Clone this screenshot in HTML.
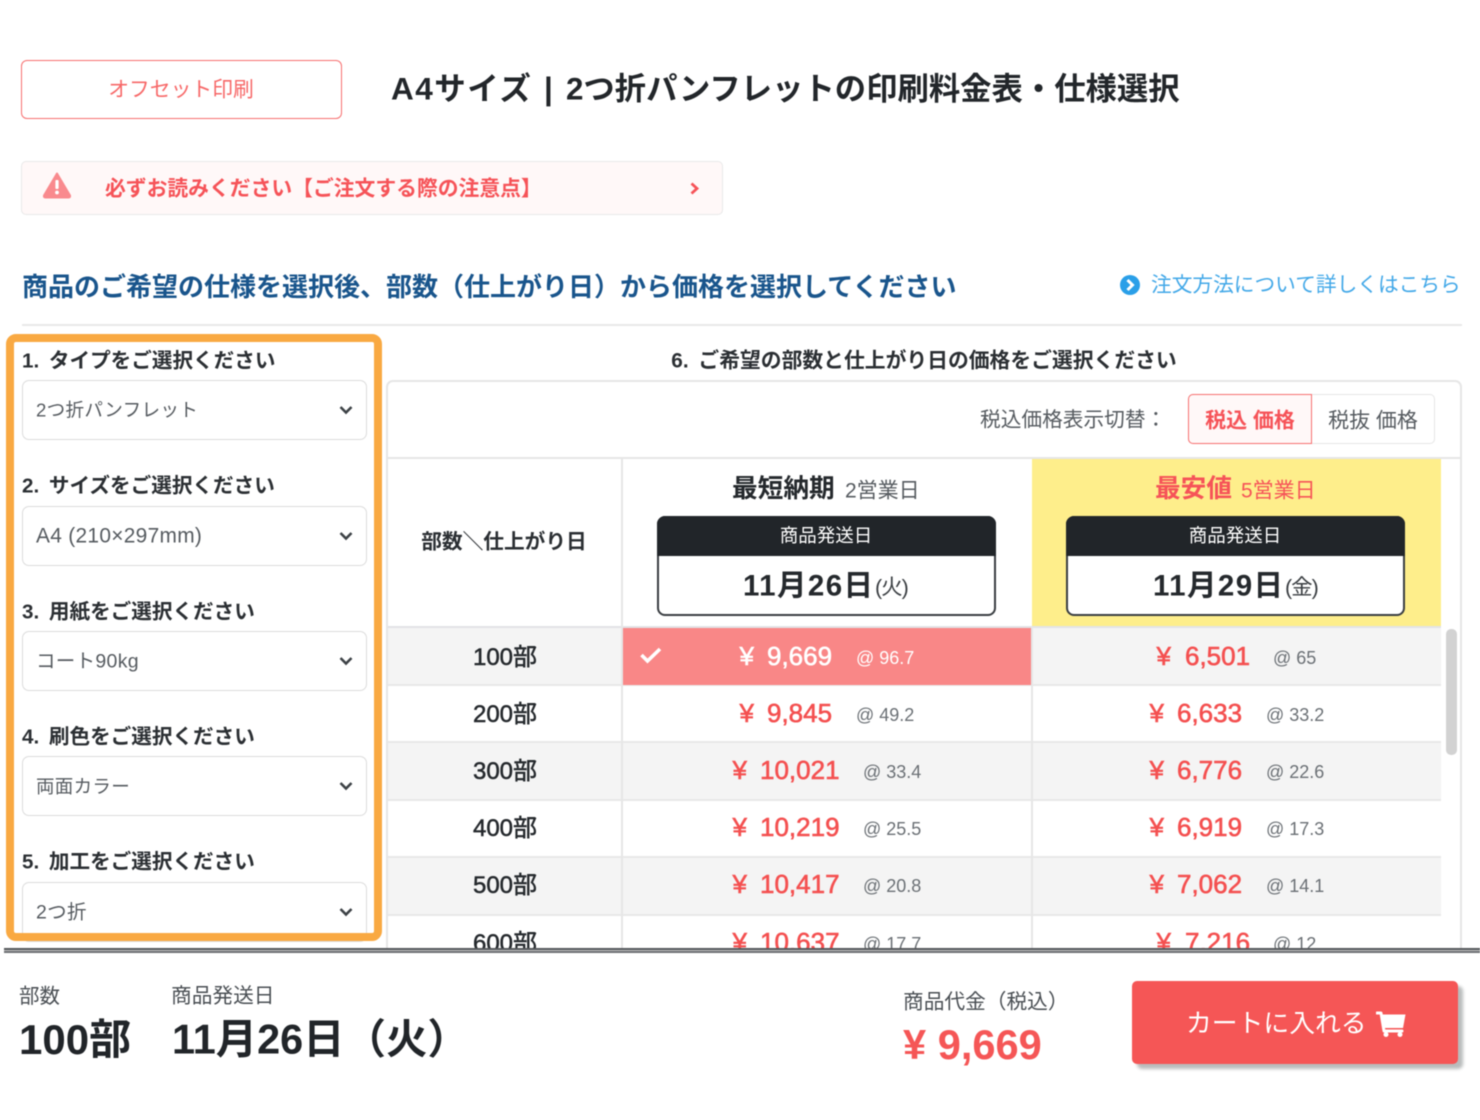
<!DOCTYPE html>
<html lang="ja"><head><meta charset="utf-8"><title>料金表</title>
<style>
html,body{margin:0;padding:0;background:#fff}
body{width:1480px;height:1120px;overflow:hidden;position:relative;font-family:"Liberation Sans","Noto Sans CJK JP",sans-serif;color:#212529}
#w{position:absolute;left:0;top:0;width:1480px;height:1120px;overflow:hidden;filter:blur(.4px)}
#w div,#w svg{position:absolute;box-sizing:border-box}
.t{white-space:nowrap;line-height:1;transform:translateY(-50%);margin-top:1px}
.c{white-space:nowrap;line-height:1;transform:translate(-50%,-50%);margin-top:1px}
.b{font-weight:700}
.lab{font-size:20.6px;font-weight:700;color:#2b2f33;left:22px;word-spacing:4px}
.sel{left:22px;width:345px;height:60px;border:1.5px solid #dcdcdc;border-radius:7px;background:#fff}
.st{left:36px;font-size:19.5px;color:#565b60;letter-spacing:.3px}
.row{left:388px;width:1053px;height:2px;background:#e8e8e8}
.bg{left:388px;width:1053px;background:#f4f4f4}
.n{font-size:24px;left:505px;color:#25292d;-webkit-text-stroke:.5px #25292d;margin-top:2px}
.y,.p{font-size:26px;color:#f45050;-webkit-text-stroke:.6px #f45050;margin-top:0}
.a{font-size:18px;color:#6b7075;margin-top:0}
.wh{color:#fff;-webkit-text-stroke-color:#fff}
.z{margin-top:0}
</style></head><body><div id="w">

<!-- table background layers -->
<div style="left:386px;top:380px;width:1076px;height:600px;border:2px solid #e6e6e6;border-radius:7px;background:#fff"></div>
<div style="left:388px;top:457px;width:1073px;height:2px;background:#e6e6e6"></div>
<div style="left:1032px;top:459px;width:409px;height:168px;background:#feee8b"></div>
<div class="bg" style="top:627px;height:57px"></div>
<div class="bg" style="top:742px;height:57px"></div>
<div class="bg" style="top:857px;height:57px"></div>
<div class="row" style="top:626px;background:#e2e3e6"></div>
<div class="row" style="top:684px"></div>
<div class="row" style="top:741px"></div>
<div class="row" style="top:799px"></div>
<div class="row" style="top:856px"></div>
<div class="row" style="top:914px"></div>
<div style="left:621px;top:459px;width:2px;height:500px;background:#e6e6e6"></div>
<div style="left:1031px;top:627px;width:2px;height:330px;background:#e6e6e6"></div>
<div style="left:623px;top:628px;width:408px;height:57px;background:#f98787"></div>
<div style="left:1446px;top:629px;width:11px;height:126px;border-radius:5px;background:#d2d2d2"></div>

<!-- top -->
<div style="left:21px;top:60px;width:321px;height:59px;border:1.5px solid #f76f6f;border-radius:6px"></div>
<div class="c" style="left:181px;top:90px;font-size:20.8px;color:#f76868">オフセット印刷</div>
<div class="t b" style="left:391px;top:87.5px;font-size:31.5px;color:#22262a;letter-spacing:1.5px">A4サイズ</div>
<div class="t b" style="left:544px;top:87.5px;font-size:31.5px;color:#22262a">|</div>
<div class="t b" style="left:566px;top:87.5px;font-size:31.35px;color:#22262a">2つ折パンフレットの印刷料金表・仕様選択</div>

<div style="left:21px;top:161px;width:702px;height:54px;background:#fff8f8;border:1.5px solid #e9e9e9;border-radius:5px"></div>
<svg style="left:42px;top:171px" width="30" height="28" viewBox="0 0 30 28"><path d="M15 2.5 L28 24.5 Q28.5 26.5 26.5 26.5 L3.5 26.5 Q1.5 26.5 2 24.5 Z" fill="#f98a8e" stroke="#f98a8e" stroke-width="2" stroke-linejoin="round"/><rect x="13.4" y="9" width="3.2" height="9" rx="1" fill="#fff"/><circle cx="15" cy="21.5" r="1.9" fill="#fff"/></svg>
<div class="t b" style="left:105px;top:189px;font-size:20.8px;color:#f65358">必ずお読みください【ご注文する際の注意点】</div>
<svg style="left:688px;top:181px" width="13" height="15" viewBox="0 0 13 15"><path d="M3.5 2.5 L9 7.5 L3.5 12.5" fill="none" stroke="#f65358" stroke-width="2.8"/></svg>

<div class="t b" style="left:22px;top:285.5px;font-size:26px;color:#19558c">商品のご希望の仕様を選択後、部数（仕上がり日）から価格を選択してください</div>
<svg style="left:1119px;top:274px" width="22" height="22" viewBox="0 0 22 22"><circle cx="11" cy="11" r="10" fill="#2a9fe8"/><path d="M8.5 6 L13.5 11 L8.5 16" fill="none" stroke="#fff" stroke-width="3"/></svg>
<div class="t" style="left:1151px;top:285px;font-size:20.7px;color:#42a8e8">注文方法について詳しくはこちら</div>
<div style="left:22px;top:324px;width:1440px;height:2px;background:#e8e8e8"></div>

<!-- selectors -->
<div class="t lab" style="top:361px">1. タイプをご選択ください</div>
<div class="sel" style="top:380px"></div>
<div class="t st" style="top:410px;font-size:18.6px">2つ折パンフレット</div>
<div class="t lab" style="top:486px">2. サイズをご選択ください</div>
<div class="sel" style="top:506px"></div>
<div class="t st" style="top:536px;font-size:20.9px">A4 (210×297mm)</div>
<div class="t lab" style="top:612px">3. 用紙をご選択ください</div>
<div class="sel" style="top:631px"></div>
<div class="t st" style="top:661px">コート90kg</div>
<div class="t lab" style="top:737px">4. 刷色をご選択ください</div>
<div class="sel" style="top:756px"></div>
<div class="t st" style="top:786px;font-size:18.5px">両面カラー</div>
<div class="t lab" style="top:862px">5. 加工をご選択ください</div>
<div class="sel" style="top:882px"></div>
<div class="t st" style="top:912px">2つ折</div>
<svg style="left:338px;top:403px" width="16" height="14" viewBox="0 0 16 14"><path d="M2.5 4 L8 9.5 L13.5 4" fill="none" stroke="#3d4246" stroke-width="2.6"/></svg>
<svg style="left:338px;top:529px" width="16" height="14" viewBox="0 0 16 14"><path d="M2.5 4 L8 9.5 L13.5 4" fill="none" stroke="#3d4246" stroke-width="2.6"/></svg>
<svg style="left:338px;top:654px" width="16" height="14" viewBox="0 0 16 14"><path d="M2.5 4 L8 9.5 L13.5 4" fill="none" stroke="#3d4246" stroke-width="2.6"/></svg>
<svg style="left:338px;top:779px" width="16" height="14" viewBox="0 0 16 14"><path d="M2.5 4 L8 9.5 L13.5 4" fill="none" stroke="#3d4246" stroke-width="2.6"/></svg>
<svg style="left:338px;top:905px" width="16" height="14" viewBox="0 0 16 14"><path d="M2.5 4 L8 9.5 L13.5 4" fill="none" stroke="#3d4246" stroke-width="2.6"/></svg>
<div style="left:6px;top:334px;width:375.5px;height:607px;border:8px solid #f9a942;border-radius:10px"></div>

<!-- table head -->
<div class="c b" style="left:924px;top:361px;font-size:20.8px;color:#2b2f33;word-spacing:4px">6. ご希望の部数と仕上がり日の価格をご選択ください</div>
<div class="t" style="left:980px;top:420px;font-size:20.7px;color:#565b60">税込価格表示切替：</div>
<div style="left:1188px;top:394px;width:247px;height:50px;border:1.5px solid #e6e6e6;border-radius:5px"></div>
<div style="left:1188px;top:394px;width:124px;height:50px;border:1.5px solid #f76f6f;border-radius:5px 0 0 5px;background:#fff8f8"></div>
<div class="c b" style="left:1250px;top:420px;font-size:21px;color:#f65358">税込 価格</div>
<div class="c" style="left:1373px;top:420px;font-size:21px;color:#565b60">税抜 価格</div>
<div class="c b" style="left:504px;top:542px;font-size:20.7px;color:#2b2f33">部数＼仕上がり日</div>

<div class="t b" style="left:732px;top:489px;font-size:25.7px;color:#25292d">最短納期</div>
<div class="t" style="left:845px;top:490px;font-size:21px;color:#565b60">2営業日</div>
<div style="left:657px;top:516px;width:339px;height:100px;border:2px solid #3a3e42;border-radius:8px;background:#fff"></div>
<div style="left:657px;top:516px;width:339px;height:40px;background:#212529;border-radius:8px 8px 0 0"></div>
<div class="c z" style="left:826px;top:536px;font-size:18.5px;color:#fff">商品発送日</div>
<div class="t b" style="left:743px;top:585px;font-size:29.5px;color:#25292d;letter-spacing:1.4px">11月26日</div>
<div class="t" style="left:875px;top:587px;font-size:21.5px;color:#3a3e42;letter-spacing:-1px">(火)</div>

<div class="t b" style="left:1155px;top:489px;font-size:25.7px;color:#f65358">最安値</div>
<div class="t" style="left:1241px;top:490px;font-size:21px;color:#f65358">5営業日</div>
<div style="left:1066px;top:516px;width:339px;height:100px;border:2px solid #3a3e42;border-radius:8px;background:#fff"></div>
<div style="left:1066px;top:516px;width:339px;height:40px;background:#212529;border-radius:8px 8px 0 0"></div>
<div class="c z" style="left:1235px;top:536px;font-size:18.5px;color:#fff">商品発送日</div>
<div class="t b" style="left:1153px;top:585px;font-size:29.5px;color:#25292d;letter-spacing:1.4px">11月29日</div>
<div class="t" style="left:1285px;top:587px;font-size:21.5px;color:#3a3e42;letter-spacing:-1px">(金)</div>

<!-- rows -->
<div class="c n" style="top:656px">100部</div>
<div class="c n" style="top:713px">200部</div>
<div class="c n" style="top:770px">300部</div>
<div class="c n" style="top:827px">400部</div>
<div class="c n" style="top:884px">500部</div>
<div class="c n" style="top:942px">600部</div>

<svg style="left:638px;top:644px" width="26" height="22" viewBox="0 0 26 22"><path d="M3.5 11 L9.5 17 L22 5" fill="none" stroke="#fff" stroke-width="3.6"/></svg>
<div class="t y wh" style="left:739.5px;top:656px">¥</div><div class="t p wh" style="left:767px;top:656px">9,669</div><div class="t a" style="left:856px;top:658px;color:#fff">@ 96.7</div>
<div class="t y" style="left:739.5px;top:713px">¥</div><div class="t p" style="left:767px;top:713px">9,845</div><div class="t a" style="left:856px;top:715px">@ 49.2</div>
<div class="t y" style="left:732.5px;top:770px">¥</div><div class="t p" style="left:760px;top:770px">10,021</div><div class="t a" style="left:863px;top:772px">@ 33.4</div>
<div class="t y" style="left:732.5px;top:827px">¥</div><div class="t p" style="left:760px;top:827px">10,219</div><div class="t a" style="left:863px;top:829px">@ 25.5</div>
<div class="t y" style="left:732.5px;top:884px">¥</div><div class="t p" style="left:760px;top:884px">10,417</div><div class="t a" style="left:863px;top:886px">@ 20.8</div>
<div class="t y" style="left:732.5px;top:942px">¥</div><div class="t p" style="left:760px;top:942px">10,637</div><div class="t a" style="left:863px;top:944px">@ 17.7</div>

<div class="t y" style="left:1156.5px;top:656px">¥</div><div class="t p" style="left:1185px;top:656px">6,501</div><div class="t a" style="left:1273px;top:658px">@ 65</div>
<div class="t y" style="left:1149.5px;top:713px">¥</div><div class="t p" style="left:1177px;top:713px">6,633</div><div class="t a" style="left:1266px;top:715px">@ 33.2</div>
<div class="t y" style="left:1149.5px;top:770px">¥</div><div class="t p" style="left:1177px;top:770px">6,776</div><div class="t a" style="left:1266px;top:772px">@ 22.6</div>
<div class="t y" style="left:1149.5px;top:827px">¥</div><div class="t p" style="left:1177px;top:827px">6,919</div><div class="t a" style="left:1266px;top:829px">@ 17.3</div>
<div class="t y" style="left:1149.5px;top:884px">¥</div><div class="t p" style="left:1177px;top:884px">7,062</div><div class="t a" style="left:1266px;top:886px">@ 14.1</div>
<div class="t y" style="left:1156.5px;top:942px">¥</div><div class="t p" style="left:1185px;top:942px">7,216</div><div class="t a" style="left:1273px;top:944px">@ 12</div>

<!-- footer -->
<div style="left:0;top:948px;width:1480px;height:172px;background:#fff"></div>
<div style="left:4px;top:948px;width:1476px;height:2px;background:#55585b"></div>
<div style="left:4px;top:950px;width:1476px;height:1px;background:#c6c6c6"></div>
<div style="left:4px;top:951px;width:1476px;height:2px;background:#6e7174"></div>

<div class="t" style="left:19px;top:996px;font-size:20.5px;color:#4a4f54">部数</div>
<div class="t" style="left:171px;top:996px;font-size:20.7px;color:#4a4f54">商品発送日</div>
<div class="t b z" style="left:19px;top:1040px;font-size:42px;color:#212529">100部</div>
<div class="t b z" style="left:172px;top:1040px;font-size:41.4px;color:#212529">11月26日（火）</div>
<div class="t" style="left:903px;top:1002px;font-size:20.7px;color:#4a4f54">商品代金（税込）</div>
<div class="t b z" style="left:903px;top:1045px;font-size:41.6px;color:#f55656">¥ 9,669</div>
<div style="left:1132px;top:981px;width:326px;height:83px;background:#f55656;border-radius:5px;box-shadow:5px 5px 3px #b9bcbc"></div>
<div class="t" style="left:1186px;top:1024px;font-size:25.8px;color:#fff">カートに入れる</div>
<svg style="left:1376px;top:1011px" width="30" height="26" viewBox="0 0 30 26"><path d="M1 2 L5 2 L8 20 L26 20" fill="none" stroke="#fff" stroke-width="3" stroke-linecap="round" stroke-linejoin="round"/><path d="M5.5 3.5 L29.5 3.5 L27 17 L8 17 Z" fill="#fff"/><circle cx="10" cy="23.5" r="2.5" fill="#fff"/><circle cx="24" cy="23.5" r="2.5" fill="#fff"/></svg>
</div></body></html>
